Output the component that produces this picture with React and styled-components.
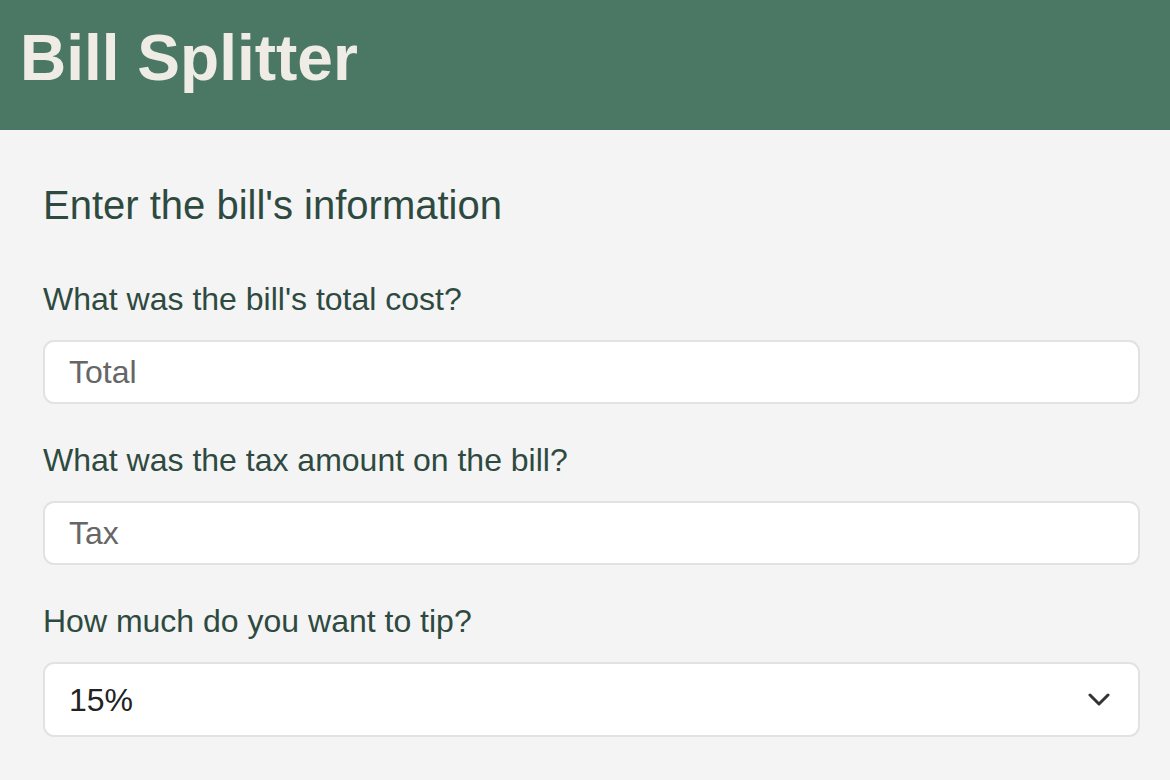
import React from "react";
import styled, { createGlobalStyle } from "styled-components";

const Global = createGlobalStyle`
  html, body { margin: 0; padding: 0; background: #f4f4f4; }
  body { font-family: "Liberation Sans", Arial, sans-serif; }
  * { box-sizing: border-box; }
`;

const Header = styled.header`
  height: 130px;
  background: #4b7864;
  display: flex;
  align-items: center;
  padding: 0 20px;
`;

const Title = styled.h1`
  margin: 0;
  margin-top: -14px;
  font-size: 64px;
  font-weight: 700;
  color: #efece6;
  line-height: 1;
`;

const Main = styled.main`
  padding: 52px 30px 40px 43px;
  display: flex;
  flex-direction: column;
`;

const Heading = styled.h2`
  margin: 0 0 53px;
  font-size: 40px;
  font-weight: 400;
  color: #2e4a40;
  line-height: 46px;
`;

const Field = styled.div`
  display: flex;
  flex-direction: column;
  margin-bottom: 38px;
`;

const Label = styled.label`
  font-size: 32px;
  color: #2e4a40;
  line-height: 37px;
  margin-bottom: 22px;
`;

const Input = styled.input`
  height: 64px;
  width: 100%;
  border: 2px solid #e2e2e2;
  border-radius: 11px;
  background: #fff;
  padding: 0 24px;
  font-family: "Liberation Sans", Arial, sans-serif;
  font-size: 32px;
  color: #333;
  outline: none;
  &::placeholder { color: #666; }
`;

const SelectWrap = styled.div`
  position: relative;
  width: 100%;
`;

const Select = styled.select`
  appearance: none;
  -webkit-appearance: none;
  height: 75px;
  width: 100%;
  border: 2px solid #e2e2e2;
  border-radius: 11px;
  background: #fff;
  padding: 0 24px;
  font-family: "Liberation Sans", Arial, sans-serif;
  font-size: 32px;
  color: #222;
  outline: none;
`;

const Chevron = styled.svg`
  position: absolute;
  right: 30px;
  top: 50%;
  transform: translateY(-50%);
  width: 22px;
  height: 14px;
  pointer-events: none;
`;

export default function App() {
  return (
    <>
      <Global />
      <Header>
        <Title>Bill Splitter</Title>
      </Header>
      <Main>
        <Heading>Enter the bill's information</Heading>
        <Field>
          <Label htmlFor="total">What was the bill's total cost?</Label>
          <Input id="total" placeholder="Total" />
        </Field>
        <Field>
          <Label htmlFor="tax">What was the tax amount on the bill?</Label>
          <Input id="tax" placeholder="Tax" />
        </Field>
        <Field>
          <Label htmlFor="tip">How much do you want to tip?</Label>
          <SelectWrap>
            <Select id="tip" defaultValue="15">
              <option value="10">10%</option>
              <option value="15">15%</option>
              <option value="18">18%</option>
              <option value="20">20%</option>
            </Select>
            <Chevron viewBox="0 0 22 14">
              <path d="M2 2 L11 11 L20 2" fill="none" stroke="#333" strokeWidth="3" strokeLinecap="round" strokeLinejoin="round" />
            </Chevron>
          </SelectWrap>
        </Field>
      </Main>
    </>
  );
}
